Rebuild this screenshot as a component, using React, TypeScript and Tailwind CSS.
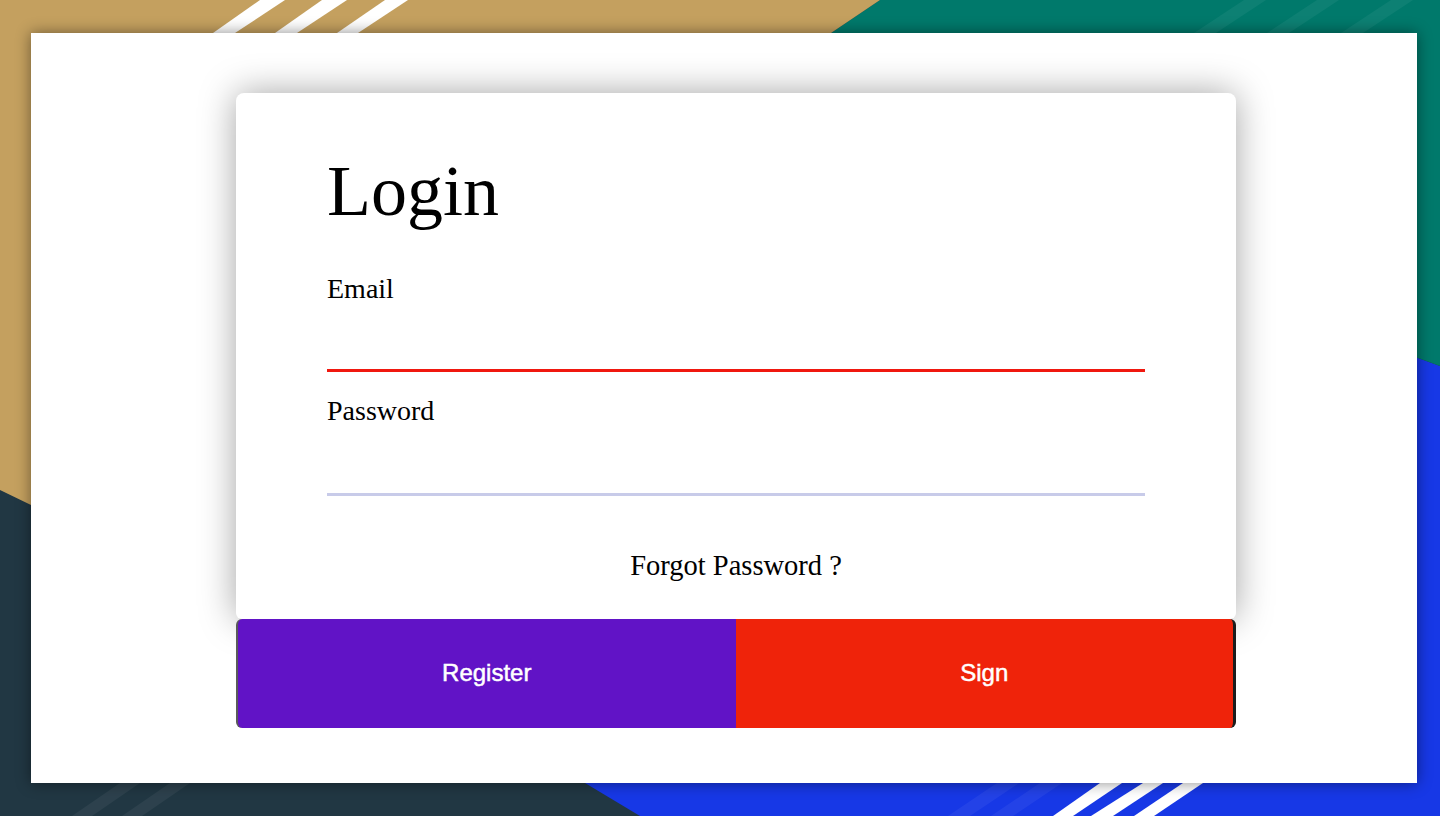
import React from 'react';

function Backdrop() {
    return (
        <svg className="absolute inset-0 h-full w-full" viewBox="0 0 1440 816" preserveAspectRatio="none" xmlns="http://www.w3.org/2000/svg">
            <rect x="0" y="0" width="1440" height="816" fill="#213743" />
            <polygon points="1440,366 1418,358 700,420 585,783 640,816 1440,816" fill="#1738e6" />
            <polygon points="880,0 1440,0 1440,366 1418,358 720,300 831,33" fill="#00796b" />
            <polygon points="0,0 880,0 831,33 720,300 31,505 0,490" fill="#c4a05f" />
            {/* faint stripes */}
            <g fill="#ffffff" opacity="0.05">
                <polygon points="1194,33 1216,33 1266,0 1244,0" />
                <polygon points="1267,33 1289,33 1339,0 1317,0" />
                <polygon points="1341,33 1363,33 1413,0 1391,0" />
                <polygon points="997,783 1019,783 970,816 948,816" />
                <polygon points="1040,783 1062,783 1013,816 991,816" />
                <polygon points="120,783 140,783 92,816 72,816" />
                <polygon points="170,783 190,783 142,816 122,816" />
            </g>
            <g fill="#ffffff">
                <polygon points="213,33 235,33 285,0 260,0" />
                <polygon points="275,33 297,33 347,0 322,0" />
                <polygon points="337,33 358,33 408,0 385,0" />
                <polygon points="1100,783 1122,783 1073,816 1053,816" />
                <polygon points="1143,783 1163,783 1113,816 1091,816" />
                <polygon points="1183,783 1203,783 1154,816 1134,816" />
            </g>
        </svg>
    );
}

export default function App() {
    return (
        <div className="relative h-[816px] w-full overflow-hidden">
            <Backdrop />
            <div className="relative h-full pt-[33px] pb-[33px] pl-[31px] pr-[23px]">
                <div className="h-full bg-white shadow-[0_0_14px_rgba(0,0,0,0.45)] pl-[205px] pt-[60px]">
                    <div className="w-[1000px]">
                        <div className="relative rounded-t-lg rounded-b-md bg-white px-[91px] pt-[58px] pb-[38px] shadow-[0_0_36px_rgba(0,0,0,0.36)] font-['Liberation_Serif',serif] text-black">
                            <h1 className="text-[72px] leading-[80px]">Login</h1>
                            <label className="mt-[42px] block text-[28px] leading-[31px]">Email</label>
                            <div className="h-[68px] border-b-[3px] border-[#f0180f]"></div>
                            <label className="mt-[23px] block text-[28px] leading-[31px]">Password</label>
                            <div className="h-[70px] border-b-[3px] border-[#c8cbe9]"></div>
                            <p className="mt-[54px] text-center text-[28.5px] leading-[31px]">Forgot Password ?</p>
                        </div>
                        <div className="relative z-10 flex h-[109px] font-['Liberation_Sans',Arial,sans-serif] text-[24px] text-white [-webkit-text-stroke:0.5px_white]">
                            <button className="flex-1 rounded-l-md border-l-2 border-[#5a5a5a] bg-[#6113c6] pb-[2px]">Register</button>
                            <button className="flex-1 rounded-r-md border-r-[3px] border-[#1c1c1c] bg-[#ef230a] pb-[2px]">Sign</button>
                        </div>
                    </div>
                </div>
            </div>
        </div>
    );
}
